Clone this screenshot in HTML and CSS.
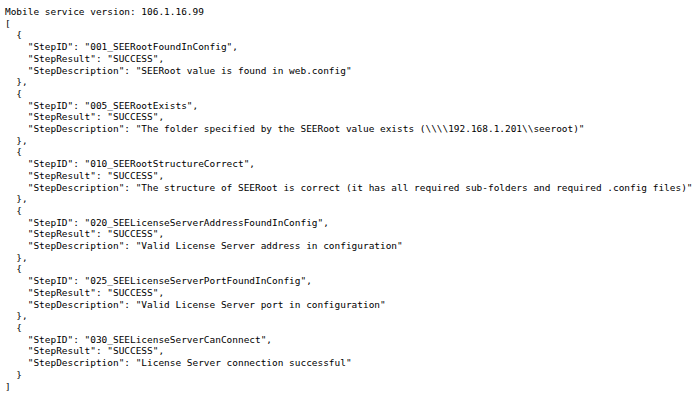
FILE: index.html
```html
<!DOCTYPE html>
<html>
<head>
<meta charset="utf-8">
<link rel="stylesheet" href="styles.css">
</head>
<body>
<pre class="output">Mobile service version: 106.1.16.99
[
  {
    "StepID": "001_SEERootFoundInConfig",
    "StepResult": "SUCCESS",
    "StepDescription": "SEERoot value is found in web.config"
  },
  {
    "StepID": "005_SEERootExists",
    "StepResult": "SUCCESS",
    "StepDescription": "The folder specified by the SEERoot value exists (\\\\192.168.1.201\\seeroot)"
  },
  {
    "StepID": "010_SEERootStructureCorrect",
    "StepResult": "SUCCESS",
    "StepDescription": "The structure of SEERoot is correct (it has all required sub-folders and required .config files)"
  },
  {
    "StepID": "020_SEELicenseServerAddressFoundInConfig",
    "StepResult": "SUCCESS",
    "StepDescription": "Valid License Server address in configuration"
  },
  {
    "StepID": "025_SEELicenseServerPortFoundInConfig",
    "StepResult": "SUCCESS",
    "StepDescription": "Valid License Server port in configuration"
  },
  {
    "StepID": "030_SEELicenseServerCanConnect",
    "StepResult": "SUCCESS",
    "StepDescription": "License Server connection successful"
  }
]</pre>
</body>
</html>
```

FILE: styles.css
```css
html, body {
  margin: 0;
  padding: 0;
  background: #ffffff;
}

.output {
  margin: 0;
  padding: 6px 0 0 5px;
  font-family: "DejaVu Sans Mono", "Liberation Mono", monospace;
  font-size: 9.45px;
  line-height: 11.7px;
  color: #000000;
  white-space: pre;
}
```
